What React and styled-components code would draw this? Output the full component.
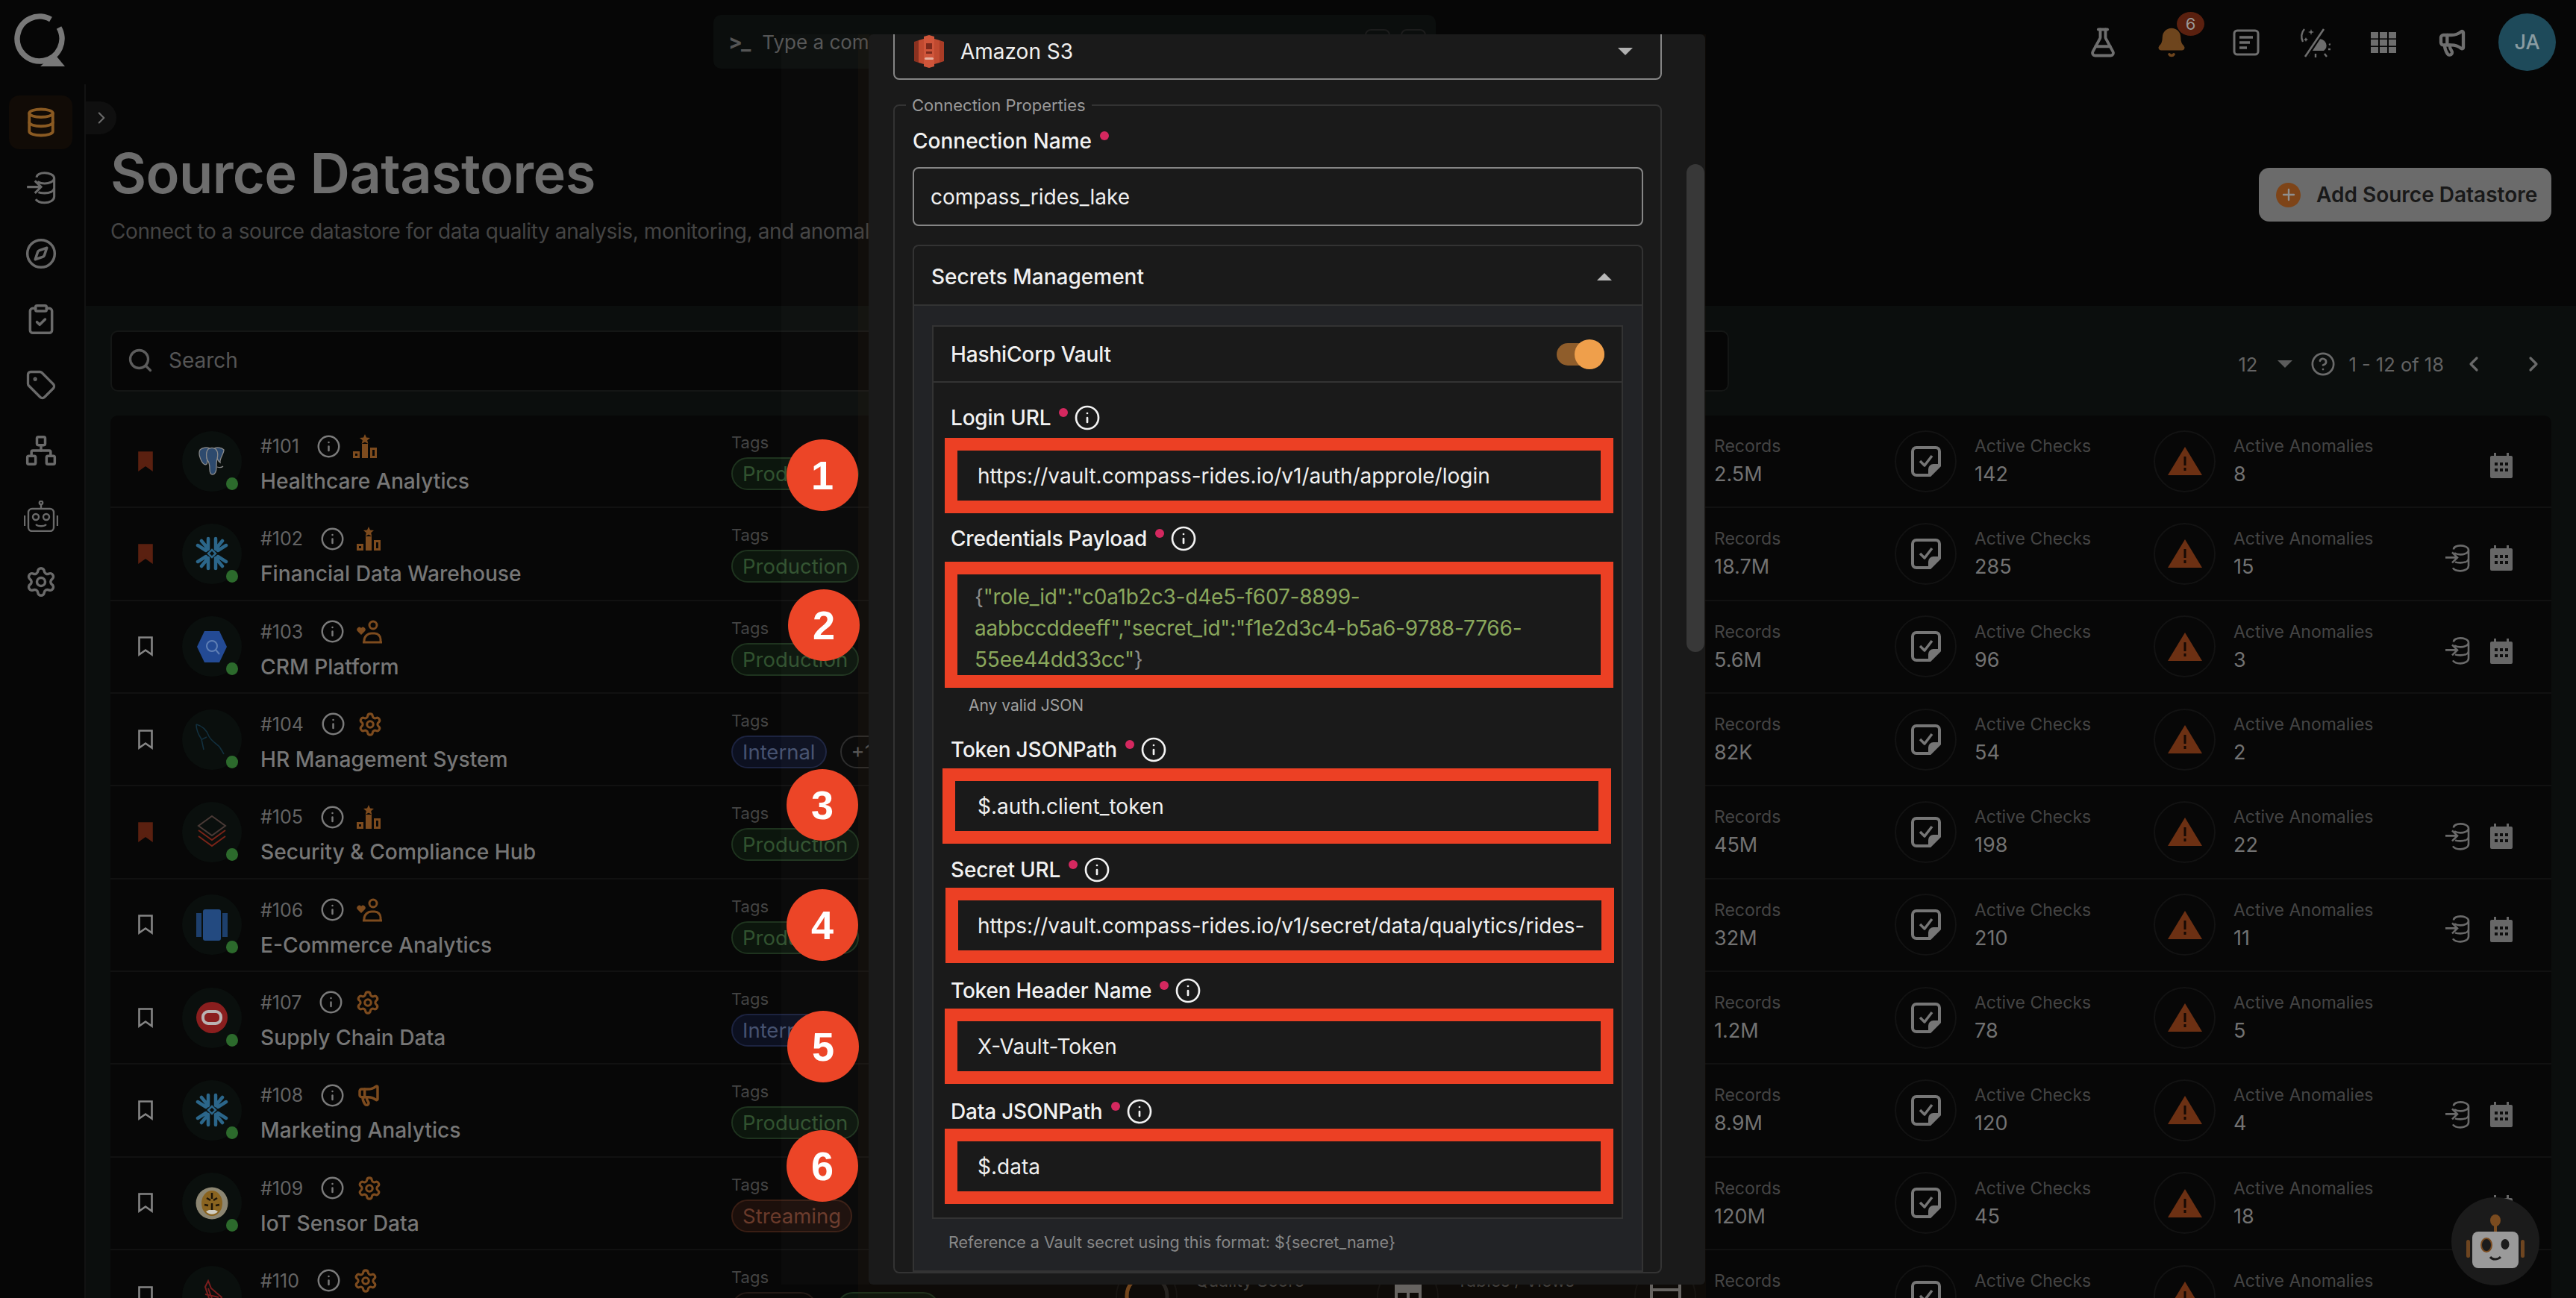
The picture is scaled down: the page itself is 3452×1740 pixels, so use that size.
import React from 'react';
import styled, { createGlobalStyle } from 'styled-components';
import {
  Bell, ChevronLeft, ChevronRight, CircleHelp, ClipboardCheck, Compass, Database, FlaskConical,
  Info, Megaphone, Network, Plus, Search, Settings, Tag,
} from 'lucide-react';

const GlobalStyle = createGlobalStyle`
  html, body {
    margin: 0;
    background: #060606;
    font-family: 'Inter', 'Liberation Sans', sans-serif;
  }
  * { box-sizing: border-box; }
`;

const Page = styled.div`
  position: relative;
  width: 3452px;
  height: 1740px;
  overflow: hidden;
  background: #060606;
  display: flex;
  flex-direction: column;
`;

/* top bar */
const TopBar = styled.header`
  height: 122px;
  flex: none;
  display: flex;
  align-items: flex-start;
`;

const LogoMark = styled.svg`
  width: 70px;
  height: 72px;
  margin: 18px 0 0 18px;
  flex: none;
`;

const CommandBar = styled.div`
  width: 968px;
  height: 72px;
  margin: 20px 0 0 868px;
  padding: 0 20px;
  background: #0b0e0d;
  border-radius: 10px;
  display: flex;
  align-items: center;
  gap: 17px;
  color: #555;
  font-size: 26px;
`;

const Prompt = styled.span`
  color: #555;
  font-weight: 700;
  font-size: 28px;
  letter-spacing: -2px;
`;

const CommandText = styled.span`
  flex: 1;
`;

const Kbd = styled.span`
  width: 34px;
  height: 34px;
  margin-right: -7px;
  margin-left: 4px;
  border: 2px solid #1c1c1c;
  border-radius: 8px;
`;

const TopActions = styled.div`
  margin: 18px 27px 0 auto;
  display: flex;
  align-items: center;
`;

const ActionSlot = styled.div`
  position: relative;
  width: 92px;
  height: 77px;
  margin-right: ${(p) => p.$after || 0}px;
  display: flex;
  align-items: center;
  justify-content: center;
  color: #6e6e6e;
`;

const NotifyBadge = styled.span`
  position: absolute;
  top: -2px;
  left: 53px;
  width: 37px;
  height: 32px;
  border-radius: 50%;
  background: #5a200f;
  color: #999;
  font-size: 22px;
  display: flex;
  align-items: center;
  justify-content: center;
`;

const Avatar = styled.div`
  width: 77px;
  height: 77px;
  margin-left: 16px;
  border-radius: 50%;
  background: #1e4a5a;
  color: #8a9ca2;
  font-size: 27px;
  font-weight: 500;
  display: flex;
  align-items: center;
  justify-content: center;
`;

/* side nav */
const Body = styled.div`
  flex: 1;
  display: flex;
  min-height: 0;
`;

const SideNav = styled.nav`
  width: 115px;
  flex: none;
  padding: 15px 18px 0 12px;
  border-right: 2px solid #121212;
  margin-top: -9px;
  display: flex;
  flex-direction: column;
  gap: 16px;
`;

const NavItem = styled.div`
  width: 85px;
  height: 72px;
  flex: none;
  border-radius: 14px;
  background: ${(p) => (p.$active ? '#110b06' : 'transparent')};
  color: ${(p) => (p.$active ? '#8a5a22' : '#6a6a6a')};
  display: flex;
  align-items: center;
  justify-content: center;
`;

const CollapseTab = styled.div`
  position: absolute;
  left: 115px;
  top: 136px;
  width: 41px;
  height: 44px;
  border-radius: 0 22px 22px 0;
  background: #0f0f0f;
  color: #6a6a6a;
  display: flex;
  align-items: center;
  justify-content: center;
`;

/* main */
const Main = styled.main`
  flex: 1;
  min-width: 0;
  display: flex;
  flex-direction: column;
`;

const PageHead = styled.div`
  height: 288px;
  flex: none;
  padding: 70px 33px 0;
  display: flex;
  justify-content: space-between;
`;

const Title = styled.h1`
  margin: 0;
  font-size: 74px;
  line-height: 80px;
  font-weight: 600;
  letter-spacing: -0.6px;
  color: #6d6d6d;
`;

const Subtitle = styled.p`
  margin: 18px 0 0;
  font-size: 28px;
  line-height: 40px;
  letter-spacing: -0.4px;
  color: #444;
  white-space: nowrap;
`;

const AddButton = styled.button`
  width: 392px;
  height: 72px;
  margin-top: 33px;
  padding: 0 0 0 23px;
  border: 0;
  border-radius: 14px;
  background: #6b6b6b;
  color: #191919;
  font: 600 28px 'Inter', sans-serif;
  display: flex;
  align-items: center;
  gap: 21px;
`;

const PlusDot = styled.span`
  width: 33px;
  height: 33px;
  border-radius: 50%;
  background: #7e4418;
  color: #8f8f8f;
  display: flex;
  align-items: center;
  justify-content: center;
`;

const ListArea = styled.section`
  flex: 1;
  min-height: 0;
  padding: 33px 33px 0;
  background: #0b0e0d;
`;

const Toolbar = styled.div`
  display: flex;
  align-items: center;
  height: 82px;
  margin-bottom: 32px;
`;

const SearchBox = styled.div`
  width: 2169px;
  height: 82px;
  padding: 0 0 2px 20px;
  border: 2px solid #141615;
  border-radius: 10px;
  background: #060606;
  color: #555;
  font-size: 28px;
  display: flex;
  align-items: center;
  gap: 20px;
`;

const Pager = styled.div`
  margin-left: auto;
  padding: 8px 8px 0 0;
  display: flex;
  align-items: center;
  color: #636363;
  font-size: 25.5px;
`;

const PageSize = styled.span`
  width: 53px;
`;

const Caret = styled.span`
  display: inline-block;
  flex: none;
  width: 0;
  height: 0;
  border-left: 10px solid transparent;
  border-right: 10px solid transparent;
  ${(p) => (p.$up ? 'border-bottom' : 'border-top')}: 10px solid ${(p) => p.$color || '#5c5c5c'};
`;

const PagerHelp = styled.span`
  margin-left: 24px;
  display: flex;
`;

const PagerCount = styled.span`
  margin: 0 24px 0 17px;
`;

const PagerBtn = styled.span`
  width: ${(p) => (p.$end ? 46 : 66)}px;
  display: flex;
  justify-content: ${(p) => (p.$end ? 'flex-end' : 'flex-start')};
`;

const List = styled.div`
  background: #070707;
  border-radius: 10px 10px 0 0;
`;

const Row = styled.div`
  height: 124.33px;
  display: grid;
  grid-template-columns: 96px 105px 631px 515px 350px 345px 349px 347px 374px 159px;
  align-items: center;
  border-bottom: 2px solid #111;
`;

const BookmarkCell = styled.div`
  padding-left: 37px;
  display: flex;
`;

const LogoCircle = styled.div`
  position: relative;
  width: 80px;
  height: 81px;
  border-radius: 50%;
  background: #0a0f0d;
  display: flex;
  align-items: center;
  justify-content: center;
`;

const StatusDot = styled.span`
  position: absolute;
  right: 5px;
  bottom: 2px;
  width: 16px;
  height: 17px;
  border-radius: 50%;
  background: #2c6a2c;
`;

const Identity = styled.div`
  align-self: start;
  padding-top: 24px;
`;

const IdLine = styled.div`
  height: 34px;
  display: flex;
  align-items: center;
  gap: 16px;
  color: #636363;
  font-size: 25px;
`;

const IdText = styled.span`
  margin-right: 7px;
`;

const Name = styled.div`
  margin-top: 12px;
  font-size: 28.2px;
  line-height: 36px;
  font-weight: 500;
  color: #767676;
`;

const TagCol = styled.div`
  display: flex;
  flex-direction: column;
  gap: 7px;
  align-self: start;
  padding-top: 23px;
`;

const MutedLabel = styled.div`
  font-size: 22px;
  line-height: 26px;
  color: #444;
  white-space: nowrap;
`;

const TagLine = styled.div`
  display: flex;
  gap: ${(p) => p.$gap || 18}px;
`;

const tagTones = {
  green: { bg: '#0c160d', line: '#1e331e', text: '#31522f' },
  blue: { bg: '#0c1020', line: '#1c2340', text: '#465270' },
  red: { bg: '#1c0f0b', line: '#3a1e14', text: '#6a3a2a' },
  plain: { bg: 'transparent', line: '#2a2a2a', text: '#555' },
  brown: { bg: '#0b0807', line: '#241a16', text: '#555' },
};

const TagPill = styled.span`
  height: 44px;
  min-width: ${(p) => p.$w || 0}px;
  padding: 0 13px;
  border-radius: 22px;
  border: 2px solid ${(p) => tagTones[p.$tone].line};
  background: ${(p) => tagTones[p.$tone].bg};
  color: ${(p) => tagTones[p.$tone].text};
  font-size: 27.5px;
  display: flex;
  align-items: center;
`;

const Stat = styled.div`
  display: flex;
  align-items: center;
  gap: 24px;
`;

const StatCircle = styled.div`
  width: 83px;
  height: 83px;
  flex: none;
  border-radius: 50%;
  border: 2px solid #121212;
  display: flex;
  align-items: center;
  justify-content: center;
`;

const StatText = styled.div`
  display: flex;
  flex-direction: column;
  gap: 8px;
`;

const StatLabel = styled.div`
  font-size: 23px;
  line-height: 28px;
  color: #444;
  white-space: nowrap;
`;

const StatValue = styled.div`
  min-height: 32px;
  font-size: 27px;
  line-height: 32px;
  color: #727272;
`;

const RowActions = styled.div`
  padding: 12px 52px 0 0;
  display: flex;
  justify-content: flex-end;
  align-items: center;
  gap: 27px;
  color: #6a6a6a;
`;

/* annotation badges over the page */
const StepBadge = styled.div`
  position: absolute;
  left: ${(p) => p.$x - 48}px;
  top: ${(p) => p.$y - 48}px;
  width: 96px;
  height: 96px;
  border-radius: 50%;
  background: #ec4527;
  color: #fff;
  font: 700 54px 'Liberation Sans', Arial, sans-serif;
  display: flex;
  align-items: center;
  justify-content: center;
  z-index: 2;
`;

const BotFab = styled.div`
  position: absolute;
  left: 3285px;
  top: 1605px;
  width: 118px;
  height: 118px;
  border-radius: 50%;
  background: #1b1b1b;
  display: flex;
  align-items: center;
  justify-content: center;
`;

/* modal */
const Tint = styled.div`
  position: absolute;
  left: 1150px;
  top: 46px;
  width: 1136px;
  bottom: 0;
  background: rgba(60, 36, 12, 0.14);
`;

const SidePanel = styled.div`
  position: absolute;
  left: 1047px;
  top: 46px;
  width: 118px;
  height: 1676px;
  background: rgba(255, 255, 255, 0.02);
`;

const Modal = styled.div`
  position: absolute;
  left: 1164px;
  top: 46px;
  width: 1121px;
  height: 1676px;
  padding: 0 58px 0 33px;
  overflow: hidden;
  border-radius: 6px;
  background: #1a1a1a;
  color: #f0f0f0;
`;

const ScrollThumb = styled.div`
  position: absolute;
  left: 1096px;
  top: 174px;
  width: 24px;
  height: 654px;
  border-radius: 12px;
  background: #383838;
`;

const SelectBox = styled.div`
  height: 76px;
  margin-top: -15px;
  padding: 0 37px 0 26px;
  border: 2px solid #858585;
  border-radius: 8px;
  display: flex;
  align-items: center;
  gap: 22px;
  font-size: 28px;
`;

const SelectName = styled.span`
  flex: 1;
`;

const Fieldset = styled.fieldset`
  margin: 21px 0 0;
  padding: 18px 23px 0 24px;
  min-width: 0;
  border: 2px solid #333;
  border-radius: 8px;
`;

const Legend = styled.legend`
  margin-left: -9px;
  padding: 0 8px;
  font-size: 22px;
  line-height: 26px;
  color: #9a9a9a;
`;

const LabelRow = styled.div`
  height: 34px;
  margin-left: ${(p) => p.$indent || 0}px;
  display: flex;
  align-items: center;
  font-size: 28px;
  font-weight: 500;
  letter-spacing: ${(p) => (p.$indent ? '-0.2px' : '0')};
  color: #f2f2f2;
`;

const Required = styled.span`
  width: 12px;
  height: 12px;
  flex: none;
  margin: -14px 8px 0 11px;
  border-radius: 50%;
  background: #d4285f;
`;

const PlainInput = styled.div`
  height: 79px;
  margin-top: 18px;
  padding: 0 22px;
  border: 2px solid #868686;
  border-radius: 8px;
  display: flex;
  align-items: center;
  font-size: 28px;
`;

const Accordion = styled.div`
  margin-top: 25px;
  border: 2px solid #333;
  border-radius: 8px 8px 0 0;
`;

const AccordionHead = styled.div`
  height: 80px;
  padding: 3px 40px 0 23px;
  border-bottom: 2px solid #333;
  display: flex;
  align-items: center;
  justify-content: space-between;
  font-size: 28px;
  font-weight: 500;
`;

const AccordionBody = styled.div`
  padding: 26px 25px 24px 24px;
  background: #222326;
`;

const VaultCard = styled.div`
  padding-bottom: 18px;
  border: 2px solid #333;
  background: #1a1a1a;
`;

const VaultHead = styled.div`
  height: 75px;
  padding: 0 23px 0 23px;
  border-bottom: 2px solid #333;
  display: flex;
  align-items: center;
  justify-content: space-between;
  font-size: 28px;
  font-weight: 500;
  letter-spacing: -0.15px;
`;

const Toggle = styled.div`
  position: relative;
  width: 64px;
  height: 30px;
  border-radius: 15px;
  background: #8f5d2b;
`;

const ToggleThumb = styled.span`
  position: absolute;
  right: 0;
  top: -5px;
  width: 40px;
  height: 40px;
  border-radius: 50%;
  background: #ef9f4b;
`;

const Field = styled.div`
  margin-top: ${(p) => p.$top}px;
`;

const MarkedInput = styled.div`
  width: 896px;
  margin-top: ${(p) => p.$gap}px;
  margin-left: ${(p) => 15 + (p.$shift || 0)}px;
  padding: ${(p) => (p.$multi ? '9px 0 0 23px' : `0 0 0 ${27 - (p.$shift || 0)}px`)};
  min-height: 101px;
  border: 17px solid #ec4024;
  background: #1a1a1a;
  font-size: 28px;
  line-height: 42px;
  display: flex;
  flex-direction: column;
  justify-content: center;
  white-space: nowrap;
  overflow: hidden;
`;

const JsonLine = styled.span`
  color: #8aa85c;
  letter-spacing: -0.2px;
`;

const Brace = styled.span`
  color: #8c8c8c;
`;

const Hint = styled.div`
  margin: 11px 0 0 47px;
  font-size: 21px;
  line-height: 26px;
  color: #a0a0a0;
`;

const FootNote = styled.div`
  margin: 17px 0 0 22px;
  font-size: 21.5px;
  line-height: 28px;
  color: #888;
`;

/* drawn icons */
const Bookmark = ({ filled }) => (
  <svg width="20" height="27" viewBox="0 0 20 27">
    <path d="M1.5 1.5h17v23l-8.5-6-8.5 6z" fill={filled ? '#5a2010' : 'none'} stroke={filled ? '#5a2010' : '#858585'} strokeWidth="2.6" />
  </svg>
);

const InfoIcon = ({ size = 33, color = '#7a7a7a' }) => <Info size={size} color={color} strokeWidth={1.8} />;

const orange = '#7d4b1e';

const Podium = () => (
  <svg width="32" height="32" viewBox="0 0 32 32" fill={orange}>
    <path d="M16 0l2 4.6 5 .4-3.8 3.2 1.2 4.8L16 10.4 11.6 13l1.2-4.8L9 5l5-.4z" />
    <rect x="12" y="13" width="8" height="19" />
    <path d="M0 23h9v9H0zm3 3v3h3v-3zM23 18h9v14h-9zm3 3v8h3v-8z" fillRule="evenodd" />
  </svg>
);

const PersonHeart = () => (
  <svg width="34" height="32" viewBox="0 0 34 32" fill="none" stroke={orange} strokeWidth="3">
    <circle cx="22" cy="7" r="5" />
    <path d="M10 30v-2a10 10 0 0 1 10-10h4a8 8 0 0 1 8 8v4zM8 30h26" />
    <path d="M6 20l-5-5a3 3 0 0 1 5-4 3 3 0 0 1 5 4z" fill={orange} stroke="none" />
  </svg>
);

const categories = {
  podium: <Podium />,
  person: <PersonHeart />,
  gear: <Settings size={34} color={orange} strokeWidth={2.2} />,
  speaker: <Megaphone size={32} color={orange} strokeWidth={2.6} />,
};

const Snowflake = () => (
  <svg width="44" height="46" viewBox="0 0 44 46" fill="none" stroke="#2b668a" strokeWidth="4.5" strokeLinecap="round">
    <path d="M17 3v13M27 3v13M17 43V30M27 43V30M3 12l11 7M8 6l9 11M41 12l-11 7M36 6 27 17M3 34l11-7M8 40l9-11M41 34l-11-7M36 40 27 29" />
    <path d="M22 18l5 5-5 5-5-5z" strokeWidth="2.5" />
  </svg>
);

const logos = {
  postgres: (
    <svg width="36" height="38" viewBox="0 0 36 38" stroke="#8a8a8a" strokeWidth="1.3">
      <path d="M2 4c3-3 9-4 13-2-3 2-5 6-4 11 0 4 2 7 0 10-2 2-5 0-7-4C2 15 0 8 2 4z" fill="#2d4a6e" />
      <path d="M34 4c-3-3-9-4-13-2 3 2 5 6 4 11 0 3 1 6 4 8-1-5 5-12 5-17z" fill="#2d4a6e" />
      <path d="M13 3c3-2 7-2 10 0 3 3 3 9 2 13-1 3-1 7-1 12 0 5-2 9-5 9-3 0-4-3-4-7 0-5 0-9-3-12-2-5-2-12 1-15z" fill="#2d4a6e" />
      <path d="M25 27c3 1 6 1 8-1" fill="none" />
    </svg>
  ),
  snowflake: <Snowflake />,
  bigquery: (
    <svg width="42" height="46" viewBox="0 0 42 46">
      <path d="M11 2h20l10 21-10 21H11L1 23z" fill="#234a94" />
      <circle cx="21" cy="22" r="7" fill="none" stroke="#5f7fb5" strokeWidth="2" />
      <path d="M26 27l5 6" stroke="#5f7fb5" strokeWidth="2" />
    </svg>
  ),
  mysql: (
    <svg width="46" height="44" viewBox="0 0 46 44" fill="none" stroke="#12303f" strokeWidth="1.6">
      <path d="M2 2c8 2 14 8 17 16 3 6 10 10 14 14 2 3 4 6 6 10" />
      <path d="M2 2c0 8 3 14 7 20l3 14M10 22l6-3" />
    </svg>
  ),
  stack: (
    <svg width="40" height="44" viewBox="0 0 40 44" fill="none" stroke="#7a2418" strokeWidth="2">
      <path d="M20 1l18 13-18 13L2 14z" stroke="#4a3a36" />
      <path d="M2 20l18 13 18-13M2 28l18 13 18-13" />
    </svg>
  ),
  redshift: (
    <svg width="42" height="44" viewBox="0 0 42 44">
      <rect x="0" y="6" width="7" height="32" fill="#1d3f6c" />
      <rect x="9" y="1" width="24" height="42" rx="3" fill="#234a80" />
      <rect x="35" y="6" width="7" height="32" fill="#1d3f6c" />
    </svg>
  ),
  oracle: (
    <svg width="44" height="44" viewBox="0 0 44 44">
      <ellipse cx="22" cy="22" rx="21" ry="21" fill="#8a1e1e" />
      <rect x="10" y="14" width="24" height="16" rx="7" fill="none" stroke="#b9b3b3" strokeWidth="4" />
    </svg>
  ),
  tiger: (
    <svg width="44" height="44" viewBox="0 0 44 44">
      <circle cx="22" cy="22" r="21.5" fill="#8c8672" />
      <ellipse cx="22" cy="22" rx="14" ry="17" fill="#8a6420" />
      <path d="M15 15l5 3M29 15l-5 3M22 8v8M12 24l5 1M32 24l-5 1M22 22v10" stroke="#1c1408" strokeWidth="2.5" />
      <path d="M14 33c4 5 12 5 16 0l-4-2h-8z" fill="#d0cdc2" />
    </svg>
  ),
  sqlserver: (
    <svg width="34" height="44" viewBox="0 0 34 44" fill="none" stroke="#7a1e1e" strokeWidth="2">
      <path d="M12 2l4 10 14 12-10 18-16-6 10-8L8 10z" />
      <path d="M8 20l18 4M12 12l8 22" />
    </svg>
  ),
};

const CheckNote = () => (
  <svg width="40" height="41" viewBox="0 0 40 41" fill="none" stroke="#767676" strokeWidth="4" strokeLinejoin="round">
    <path d="M25 39H7a5 5 0 0 1-5-5V7a5 5 0 0 1 5-5h26a5 5 0 0 1 5 5v19z" />
    <path d="M38 26H30a5 5 0 0 0-5 5v8z" fill="#767676" />
    <path d="M12 20l6 6 10-13" strokeWidth="3.5" />
  </svg>
);

const Warning = () => (
  <svg width="46" height="38" viewBox="0 0 46 38">
    <path d="M23 0l23 38H0z" fill="#6c3013" />
    <rect x="21.5" y="13" width="3" height="12" fill="#160904" />
    <rect x="21.5" y="28" width="3" height="4" fill="#160904" />
  </svg>
);

const GaugeIcon = () => (
  <svg width="62" height="62" viewBox="0 0 62 62" fill="none" strokeWidth="5">
    <circle cx="31" cy="31" r="27" stroke="#242424" />
    <path d="M31 58A27 27 0 0 1 31 4" stroke="#7d4b1e" />
  </svg>
);

const TablesIcon = () => (
  <svg width="36" height="36" viewBox="0 0 36 36" fill="#6e6e6e">
    <path d="M0 0h36v36H0zm4 14v18h12V14zm16 0v18h12V14z" fillRule="evenodd" />
  </svg>
);

const RecordsIcon = () => (
  <svg width="42" height="36" viewBox="0 0 42 36" fill="none" stroke="#6e6e6e" strokeWidth="4">
    <path d="M2 0v36M40 0v36M2 10h38M2 26h38" />
  </svg>
);

const CalendarIcon = () => (
  <svg width="30" height="34" viewBox="0 0 30 34">
    <path d="M5 0h3v4h14V0h3v4h3a2 2 0 0 1 2 2v26a2 2 0 0 1-2 2H2a2 2 0 0 1-2-2V6a2 2 0 0 1 2-2h3z" fill="#676767" />
    <path d="M6 13h4v4H6zM13 13h4v4h-4zM20 13h4v4h-4zM6 21h4v4H6zM13 21h4v4h-4zM20 21h4v4h-4z" fill="#0d0d0d" />
  </svg>
);

const MergeDb = ({ size = 34, color = '#6a6a6a' }) => (
  <svg width={size} height={size * 1.14} viewBox="0 0 34 38" fill="none" stroke={color} strokeWidth="2.6">
    <path d="M12 7c0-3 4-5 9-5s11 2 11 6-6 6-11 6c-3 0-6-1-8-2M32 8v21c0 4-5 7-11 7-4 0-8-1-10-4M32 19c0 4-5 6-11 6-3 0-5 0-7-1" />
    <path d="M1 18h15M10 11l7 7-7 7" />
  </svg>
);

const NavBot = () => (
  <svg width="46" height="42" viewBox="0 0 46 42" fill="none" stroke="#6a6a6a" strokeWidth="2.4">
    <circle cx="23" cy="3" r="2.2" />
    <path d="M23 5v6" />
    <rect x="6" y="11" width="34" height="30" rx="5" />
    <path d="M1 20v14M45 20v14" />
    <circle cx="16" cy="22" r="4" />
    <circle cx="30" cy="22" r="4" />
    <path d="M16 32c3 3 11 3 14 0" />
  </svg>
);

const S3Icon = () => (
  <svg width="40" height="44" viewBox="0 0 40 44">
    <path d="M0 9l6-2v30l-6-2z" fill="#8a3120" />
    <path d="M40 9l-6-2v30l6-2z" fill="#a93c26" />
    <path d="M6 7l7-2v34l-7-2zM34 7l-7-2v34l7-2z" fill="#c04a30" />
    <path d="M13 2l7-2 7 2v40l-7 2-7-2z" fill="#cf553a" />
    <path d="M16 11h8v8h-8zm0 11h8v3h-8z" fill="#7c2a1c" />
    <rect x="14" y="30" width="12" height="3" rx="1.5" fill="#e6b0a0" />
  </svg>
);

const RobotIcon = () => (
  <svg width="78" height="72" viewBox="0 0 78 72">
    <ellipse cx="39" cy="8" rx="7" ry="8" fill="#7a4b1f" />
    <rect x="37" y="14" width="4" height="9" fill="#7a4b1f" />
    <rect x="0" y="34" width="5" height="24" rx="2.5" fill="#6e4520" />
    <rect x="73" y="34" width="5" height="24" rx="2.5" fill="#6e4520" />
    <rect x="8" y="23" width="62" height="49" rx="8" fill="#9a9a9a" />
    <ellipse cx="27" cy="41" rx="7" ry="9" fill="#1c1c1c" stroke="#7a4b1f" strokeWidth="2" />
    <ellipse cx="52" cy="40" rx="5.5" ry="7" fill="#1c1c1c" />
    <path d="M32 57c3 4 10 4 14 0" fill="none" stroke="#1c1c1c" strokeWidth="3" />
  </svg>
);

const GridTiles = () => (
  <svg width="34" height="28" viewBox="0 0 34 28" fill="#6e6e6e">
    {[0, 12, 24].map((x) =>
      [0, 10, 20].map((y) => <rect key={`${x}-${y}`} x={x} y={y} width="10" height="8.4" />)
    )}
  </svg>
);

const DocIcon = () => (
  <svg width="36" height="36" viewBox="0 0 36 36" fill="none" stroke="#6e6e6e" strokeWidth="3">
    <rect x="2" y="2" width="32" height="32" rx="4" />
    <path d="M9 11h18M9 18h14M9 25h10" strokeWidth="3.4" />
  </svg>
);

const ThemeToggle = () => (
  <svg width="42" height="42" viewBox="0 0 42 42" fill="none" stroke="#6e6e6e" strokeWidth="2.4">
    <path d="M7 3A15 15 0 0 0 5 20" />
    <path d="M16 3l1 3 3 1-3 1-1 3-1-3-3-1 3-1zM9 14l1 2 2 1-2 1-1 2-1-2-2-1 2-1z" fill="#6e6e6e" stroke="none" />
    <path d="M36 22A9 9 0 0 0 24 17l-8 15h17a9 9 0 0 0 3-10z" fill="#6e6e6e" stroke="none" />
    <path d="M22 36v5M34 36l3 4M15 34l-3 5M40 24l2-1M39 30h3" />
    <path d="M36 1 10 41" strokeWidth="3.4" stroke="#060606" />
    <path d="M33 3 8 40" strokeWidth="2.6" />
  </svg>
);

const rows = [
  { id: 101, name: 'Healthcare Analytics', logo: 'postgres', cat: 'podium', saved: true, tags: [['Production', 'green']], records: '2.5M', checks: '142', anomalies: '8' },
  { id: 102, name: 'Financial Data Warehouse', logo: 'snowflake', cat: 'podium', saved: true, merge: true, tags: [['Production', 'green']], records: '18.7M', checks: '285', anomalies: '15' },
  { id: 103, name: 'CRM Platform', logo: 'bigquery', cat: 'person', merge: true, tags: [['Production', 'green']], records: '5.6M', checks: '96', anomalies: '3' },
  { id: 104, name: 'HR Management System', logo: 'mysql', cat: 'gear', noSchedule: true, tags: [['Internal', 'blue'], ['+1', 'plain']], records: '82K', checks: '54', anomalies: '2' },
  { id: 105, name: 'Security & Compliance Hub', logo: 'stack', cat: 'podium', saved: true, merge: true, tags: [['Production', 'green']], records: '45M', checks: '198', anomalies: '22' },
  { id: 106, name: 'E-Commerce Analytics', logo: 'redshift', cat: 'person', merge: true, tags: [['Production', 'green']], records: '32M', checks: '210', anomalies: '11' },
  { id: 107, name: 'Supply Chain Data', logo: 'oracle', cat: 'gear', noSchedule: true, tags: [['Internal', 'blue']], records: '1.2M', checks: '78', anomalies: '5' },
  { id: 108, name: 'Marketing Analytics', logo: 'snowflake', cat: 'speaker', merge: true, tags: [['Production', 'green']], records: '8.9M', checks: '120', anomalies: '4' },
  { id: 109, name: 'IoT Sensor Data', logo: 'tiger', cat: 'gear', tags: [['Streaming', 'red']], records: '120M', checks: '45', anomalies: '18' },
  { id: 110, name: '', logo: 'sqlserver', cat: 'gear', noSchedule: true, peek: true, pills: [[115, 'brown'], [138, 'green']], records: '', checks: '', anomalies: '' },
];

const DatastoreRow = ({ row }) => (
  <Row>
    <BookmarkCell><Bookmark filled={row.saved} /></BookmarkCell>
    <LogoCircle>
      {logos[row.logo]}
      <StatusDot />
    </LogoCircle>
    <Identity>
      <IdLine>
        <IdText>#{row.id}</IdText>
        <InfoIcon />
        {categories[row.cat]}
      </IdLine>
      <Name>{row.name}</Name>
    </Identity>
    <TagCol>
      <MutedLabel>Tags</MutedLabel>
      <TagLine $gap={row.pills ? 26 : 18}>
        {row.tags && row.tags.map(([text, tone]) => <TagPill key={text} $tone={tone}>{text}</TagPill>)}
        {row.pills && row.pills.map(([w, tone]) => <TagPill key={w} $w={w} $tone={tone} />)}
      </TagLine>
    </TagCol>
    {/* these two columns sit behind the dialog, only the last row shows below it */}
    {row.peek ? (
      <Stat>
        <StatCircle><GaugeIcon /></StatCircle>
        <StatText><StatLabel>Quality Score</StatLabel><StatValue /></StatText>
      </Stat>
    ) : <div />}
    {row.peek ? (
      <Stat>
        <StatCircle><TablesIcon /></StatCircle>
        <StatText><StatLabel>Tables / Views</StatLabel><StatValue /></StatText>
      </Stat>
    ) : <div />}
    <Stat>
      <StatCircle><RecordsIcon /></StatCircle>
      <StatText><StatLabel>Records</StatLabel><StatValue>{row.records}</StatValue></StatText>
    </Stat>
    <Stat>
      <StatCircle><CheckNote /></StatCircle>
      <StatText><StatLabel>Active Checks</StatLabel><StatValue>{row.checks}</StatValue></StatText>
    </Stat>
    <Stat>
      <StatCircle><Warning /></StatCircle>
      <StatText><StatLabel>Active Anomalies</StatLabel><StatValue>{row.anomalies}</StatValue></StatText>
    </Stat>
    <RowActions>
      {row.merge && <MergeDb />}
      {!row.noSchedule && <CalendarIcon />}
    </RowActions>
  </Row>
);

const FieldLabel = ({ text, indent = 23 }) => (
  <LabelRow $indent={indent}>
    {text}
    <Required />
    <InfoIcon size={36} color="#f2f2f2" />
  </LabelRow>
);

const steps = [
  [1102, 637], [1104, 838], [1102, 1079], [1102, 1240], [1103, 1403], [1102, 1563],
];

export default function App() {
  return (
    <Page>
      <GlobalStyle />
      <TopBar>
        <LogoMark viewBox="0 0 70 72" fill="none">
          <path d="M50 8A30 30 0 1 0 61 19" stroke="#787878" strokeWidth="7.5" />
          <path d="M36 71h33L54 53l-8 9z" fill="#787878" />
        </LogoMark>
        <CommandBar>
          <Prompt>&gt;_</Prompt>
          <CommandText>Type a command...</CommandText>
          <Kbd /><Kbd />
        </CommandBar>
        <TopActions>
          <ActionSlot><FlaskConical size={42} strokeWidth={2.2} /></ActionSlot>
          <ActionSlot $after={8}>
            <Bell size={42} fill="#6e451d" color="#6e451d" />
            <NotifyBadge>6</NotifyBadge>
          </ActionSlot>
          <ActionSlot><DocIcon /></ActionSlot>
          <ActionSlot><ThemeToggle /></ActionSlot>
          <ActionSlot><GridTiles /></ActionSlot>
          <ActionSlot><Megaphone size={40} strokeWidth={2.6} /></ActionSlot>
          <Avatar>JA</Avatar>
        </TopActions>
      </TopBar>

      <Body>
        <SideNav>
          <NavItem $active><Database size={42} strokeWidth={2.2} /></NavItem>
          <NavItem><MergeDb size={40} color="#6a6a6a" /></NavItem>
          <NavItem><Compass size={44} strokeWidth={1.9} /></NavItem>
          <NavItem><ClipboardCheck size={44} strokeWidth={1.9} /></NavItem>
          <NavItem><Tag size={42} strokeWidth={1.9} /></NavItem>
          <NavItem><Network size={44} strokeWidth={1.9} /></NavItem>
          <NavItem><NavBot /></NavItem>
          <NavItem><Settings size={44} strokeWidth={1.9} /></NavItem>
        </SideNav>
        <Main>
          <PageHead>
            <div>
              <Title>Source Datastores</Title>
              <Subtitle>Connect to a source datastore for data quality analysis, monitoring, and anomaly detection.</Subtitle>
            </div>
            <AddButton>
              <PlusDot><Plus size={24} strokeWidth={2.4} /></PlusDot>
              Add Source Datastore
            </AddButton>
          </PageHead>
          <ListArea>
            <Toolbar>
              <SearchBox>
                <Search size={36} color="#5c5c5c" strokeWidth={2.2} />
                Search
              </SearchBox>
              <Pager>
                <PageSize>12</PageSize>
                <Caret />
                <PagerHelp><CircleHelp size={34} color="#6a6a6a" strokeWidth={1.9} /></PagerHelp>
                <PagerCount>1 - 12 of 18</PagerCount>
                <PagerBtn><ChevronLeft size={32} color="#6a6a6a" strokeWidth={2.4} /></PagerBtn>
                <PagerBtn $end><ChevronRight size={32} color="#6a6a6a" strokeWidth={2.4} /></PagerBtn>
              </Pager>
            </Toolbar>
            <List>
              {rows.map((row) => <DatastoreRow key={row.id} row={row} />)}
            </List>
          </ListArea>
        </Main>
      </Body>

      <CollapseTab><ChevronRight size={26} strokeWidth={2} /></CollapseTab>
      <BotFab><RobotIcon /></BotFab>

      <Tint />
      <SidePanel />
      <Modal>
        <SelectBox>
          <S3Icon />
          <SelectName>Amazon S3</SelectName>
          <Caret $color="#b0b0b0" />
        </SelectBox>
        <Fieldset>
          <Legend>Connection Properties</Legend>
          <LabelRow>Connection Name<Required /></LabelRow>
          <PlainInput>compass_rides_lake</PlainInput>
          <Accordion>
            <AccordionHead>
              Secrets Management
              <Caret $up $color="#b8b8b8" />
            </AccordionHead>
            <AccordionBody>
              <VaultCard>
                <VaultHead>
                  HashiCorp Vault
                  <Toggle><ToggleThumb /></Toggle>
                </VaultHead>
                <Field $top={30}>
                  <FieldLabel text="Login URL" />
                  <MarkedInput $gap={10}>https://vault.compass-rides.io/v1/auth/approle/login</MarkedInput>
                </Field>
                <Field $top={17}>
                  <FieldLabel text="Credentials Payload" />
                  <MarkedInput $gap={14} $multi>
                    <JsonLine><Brace>{'{'}</Brace>"role_id":"c0a1b2c3-d4e5-f607-8899-</JsonLine>
                    <JsonLine>aabbccddeeff","secret_id":"f1e2d3c4-b5a6-9788-7766-</JsonLine>
                    <JsonLine>55ee44dd33cc"<Brace>{'}'}</Brace></JsonLine>
                  </MarkedInput>
                  <Hint>Any valid JSON</Hint>
                </Field>
                <Field $top={29}>
                  <FieldLabel text="Token JSONPath" />
                  <MarkedInput $gap={8} $shift={-3}>$.auth.client_token</MarkedInput>
                </Field>
                <Field $top={18}>
                  <FieldLabel text="Secret URL" />
                  <MarkedInput $gap={7} $shift={1}>https://vault.compass-rides.io/v1/secret/data/qualytics/rides-</MarkedInput>
                </Field>
                <Field $top={20}>
                  <FieldLabel text="Token Header Name" />
                  <MarkedInput $gap={7}>X-Vault-Token</MarkedInput>
                </Field>
                <Field $top={20}>
                  <FieldLabel text="Data JSONPath" />
                  <MarkedInput $gap={6}>$.data</MarkedInput>
                </Field>
              </VaultCard>
              <FootNote>Reference a Vault secret using this format: {'${secret_name}'}</FootNote>
            </AccordionBody>
          </Accordion>
        </Fieldset>
        <ScrollThumb />
      </Modal>

      {steps.map(([x, y], i) => <StepBadge key={i} $x={x} $y={y}>{i + 1}</StepBadge>)}
    </Page>
  );
}
